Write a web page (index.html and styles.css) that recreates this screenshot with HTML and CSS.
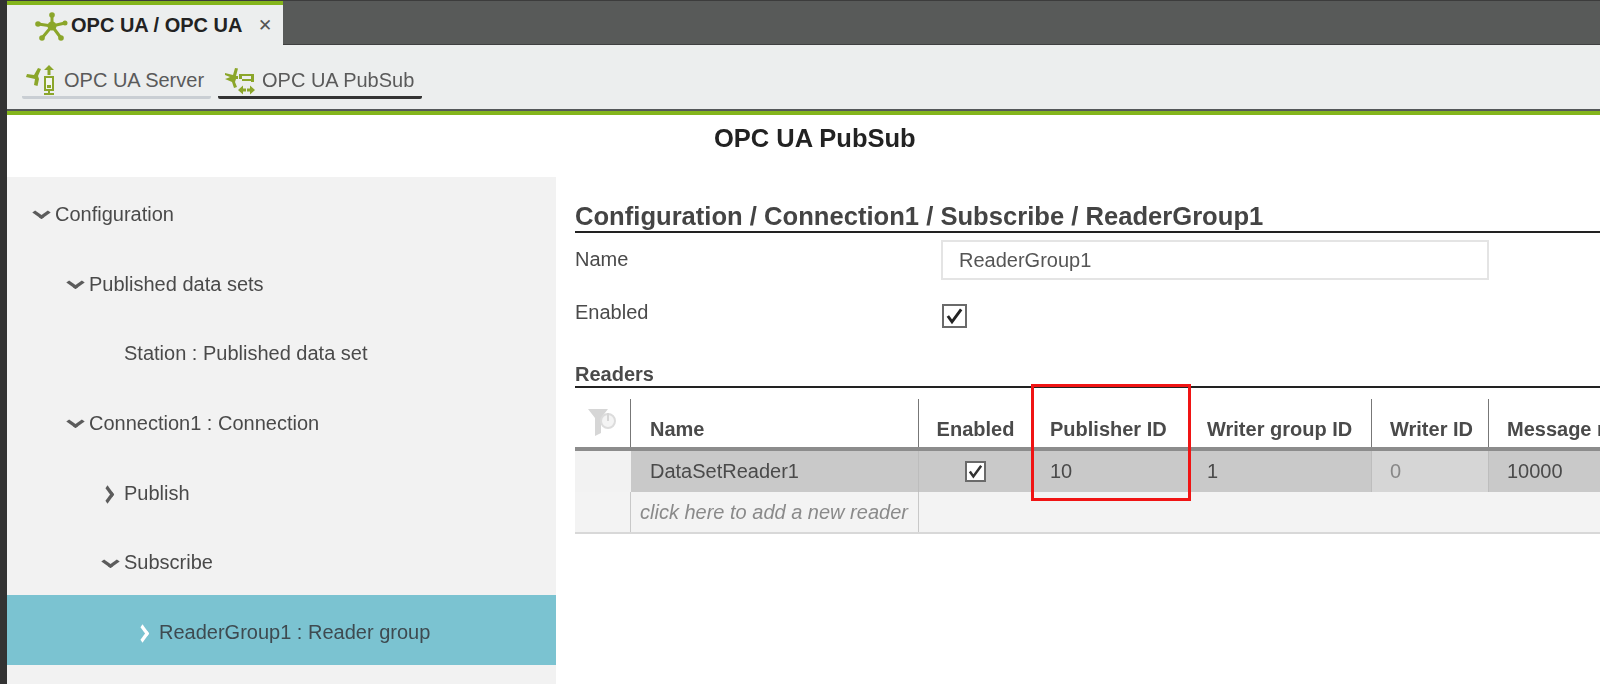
FILE: index.html
```html
<!DOCTYPE html>
<html lang="en">
<head>
<meta charset="utf-8">
<title>OPC UA PubSub</title>
<link rel="stylesheet" href="styles.css">
</head>
<body>
<div class="page">
  <header class="tabbar">
    <div class="tab">
      <svg class="tab-icon" width="34" height="30" viewBox="0 0 34 30"><g stroke="#8ba62a" fill="#8ba62a"><path d="M17 15L3 13M17 15L17 5M17 15L30 12M17 15L26 27M17 15L7 27" fill="none" stroke-width="3"/><circle cx="17" cy="15" r="4.500" stroke="none"/><circle cx="3" cy="13" r="2.800" stroke="none"/><circle cx="17" cy="4" r="2.800" stroke="none"/><circle cx="30" cy="12" r="2.500" stroke="none"/><circle cx="26" cy="27" r="2.800" stroke="none"/><circle cx="7" cy="27" r="2.800" stroke="none"/></g></svg>
      <span class="tab-label">OPC UA / OPC UA</span>
      <span class="tab-close">✕</span>
    </div>
  </header>
  <nav class="subnav">
    <div class="subitem">
      <svg width="32" height="32" viewBox="0 0 32 32"><g fill="#8ba62a"><path d="M1 10l7 1 4-7 3 1-3 7 1 3-1.500 7-3.500-1 1-6-9-2z"/><path d="M23 1l5 5h-3.500v5h-3V6H18z"/><path d="M22 25h2v4h-2zM18 29h10v2H18z"/></g><rect x="19" y="13" width="8" height="13" fill="#f4f6f0" stroke="#8ba62a" stroke-width="2"/><rect x="21" y="21" width="4" height="3" fill="#8ba62a"/></svg>
      <span>OPC UA Server</span>
    </div>
    <div class="subitem is-active">
      <svg width="32" height="32" viewBox="0 0 32 32"><g fill="#8ba62a"><path d="M1 9l8 2 2-7 3 .5-2 7.500h2v3h-2l-1 3 2 5-3 1-2-6-7-3 3-1 2-1-5-2z"/><path d="M15 10h15v2H15zM15 17h3v-5h-3zM27 12h3v6h-3zM15 15h15v2H15z"/><path d="M14 26l5-4.500v3h3v3h-3v3zM31 26l-5-4.500v3h-3v3h3v3z"/></g></svg>
      <span>OPC UA PubSub</span>
    </div>
  </nav>
  <div class="accent"></div>
  <h1 class="page-title">OPC UA PubSub</h1>
  <main class="workspace">
    <aside class="tree">
      <div class="node lvl-0"><span class="arrow down"></span>Configuration</div>
      <div class="node lvl-1"><span class="arrow down"></span>Published data sets</div>
      <div class="node lvl-2"><span class="arrow none"></span>Station : Published data set</div>
      <div class="node lvl-1"><span class="arrow down"></span>Connection1 : Connection</div>
      <div class="node lvl-2"><span class="arrow right"></span>Publish</div>
      <div class="node lvl-2"><span class="arrow down"></span>Subscribe</div>
      <div class="node lvl-3 is-selected"><span class="arrow right"></span>ReaderGroup1 : Reader group</div>
    </aside>
    <section class="detail">
      <h2 class="detail-title">Configuration / Connection1 / Subscribe / ReaderGroup1</h2>
      <div class="form-row row-name">
        <span class="form-label">Name</span>
        <div class="input">ReaderGroup1</div>
      </div>
      <div class="form-row row-enabled">
        <span class="form-label">Enabled</span>
        <span class="check check-lg"><svg viewBox="0 0 24 24"><path d="M4 12l5 7 11-15" fill="none" stroke="#222" stroke-width="3.500"/></svg></span>
      </div>
      <h3 class="section-title">Readers</h3>
      <div class="grid">
        <div class="grid-row head">
          <div class="cell c-filter"><svg width="34" height="30" viewBox="0 0 34 30"><path d="M1 1h20l-7 9v15l-6 3V10z" fill="#d6d6d6"/><circle cx="21" cy="13" r="7" fill="#f4f4f4" stroke="#dcdcdc" stroke-width="2"/><path d="M21 5v8" stroke="#d6d6d6" stroke-width="2"/></svg></div>
          <div class="cell c-name">Name</div>
          <div class="cell c-en center">Enabled</div>
          <div class="cell c-pub">Publisher ID</div>
          <div class="cell c-grp">Writer group ID</div>
          <div class="cell c-wid">Writer ID</div>
          <div class="cell c-msg">Message receive timeout</div>
        </div>
        <div class="grid-row body selected">
          <div class="cell c-filter"></div>
          <div class="cell c-name">DataSetReader1</div>
          <div class="cell c-en center"><span class="check"><svg viewBox="0 0 24 24"><path d="M4 12l5 7 11-15" fill="none" stroke="#333" stroke-width="3.500"/></svg></span></div>
          <div class="cell c-pub">10</div>
          <div class="cell c-grp">1</div>
          <div class="cell c-wid readonly">0</div>
          <div class="cell c-msg">10000</div>
        </div>
        <div class="grid-row body add">
          <div class="cell c-filter"></div>
          <div class="cell c-name add-hint">click here to add a new reader</div>
        </div>
      </div>
      <div class="highlight"></div>
    </section>
  </main>
</div>
</body>
</html>
```
FILE: styles.css
```css
* { box-sizing: border-box; }
html, body { margin: 0; height: 100%; overflow: hidden; background: #fff; }
body { font-family: "Liberation Sans", Arial, sans-serif; color: #444; }

.page {
  width: 1600px;
  height: 684px;
  border-left: 7px solid #333;
  overflow: hidden;
  display: flex;
  flex-direction: column;
  filter: blur(0.55px);
}

.tabbar {
  height: 45px;
  flex: none;
  background: #585a59;
  border-top: 1px solid #3c3c3c;
  border-bottom: 1px solid #3f4040;
}
.tab {
  width: 276px;
  height: 45px;
  background: #eceeee;
  border-top: 4px solid #84b51c;
  display: flex;
  align-items: center;
  padding-left: 28px;
  gap: 2px;
  font-size: 20px;
  font-weight: 700;
  color: #222;
}
.tab-icon { flex: none; }
.tab-close { margin-left: 13px; font-size: 17px; font-weight: 400; color: #555; }

.subnav {
  height: 66px;
  flex: none;
  background: #eceeee;
  border-bottom: 2px solid #55585a;
  display: flex;
  align-items: flex-start;
  padding: 19px 0 0 15px;
  gap: 7px;
  font-size: 20px;
  color: #5a5a5a;
}
.subitem {
  height: 35px;
  width: 189px;
  display: flex;
  align-items: center;
  gap: 6px;
  padding-left: 4px;
  border-bottom: 3px solid #c9ced3;
  border-radius: 2px;
}
.subitem.is-active { width: 204px; padding-left: 6px; border-bottom-color: #333; }

.accent { height: 4px; flex: none; background: #84b51c; }

.page-title {
  margin: 0;
  height: 62px;
  flex: none;
  padding: 9px 0 0 707px;
  font-size: 25.500px;
  line-height: 28px;
  font-weight: 700;
  color: #222;
}

.workspace {
  flex: 1;
  display: grid;
  grid-template-columns: 549px 1fr;
  min-height: 0;
}

.tree { background: #f2f2f2; font-size: 20px; color: #4a4a4a; }
.node {
  height: 69.700px;
  display: flex;
  align-items: center;
  padding-top: 5px;
}
.lvl-0 { padding-left: 26px; }
.lvl-1 { padding-left: 60px; }
.lvl-2 { padding-left: 95px; }
.lvl-3 { padding-left: 130px; }
.is-selected { background: #7bc3d1; color: #3e4a50; }

.arrow {
  width: 22px;
  flex: none;
  height: 12px;
  position: relative;
}
.arrow.down::before, .arrow.right::before {
  content: "";
  position: absolute;
  width: 9px;
  height: 9px;
  border-right: 4px solid #5c5c5c;
  border-bottom: 4px solid #5c5c5c;
}
.arrow.down::before { left: 2px; top: -2px; transform: scaleY(0.72) rotate(45deg); }
.arrow.right::before { left: -1px; top: 1px; transform: scaleX(0.72) rotate(-45deg); }
.is-selected .arrow.right::before { border-color: #fff; }

.detail { padding: 0 0 0 19px; position: relative; overflow: hidden; }
.detail-title {
  margin: 0;
  height: 56px;
  padding-top: 25px;
  border-bottom: 2px solid #222;
  font-size: 25.600px;
  line-height: 28px;
  font-weight: 700;
  color: #444;
  white-space: nowrap;
}
.form-row { display: flex; align-items: center; }
.form-label { width: 366px; flex: none; font-size: 20px; color: #4a4a4a; }
.row-name { height: 53px; padding-top: 1px; }
.row-name .form-label { margin-top: -1px; }
.row-enabled { height: 54px; }
.row-enabled .form-label { margin-top: -2px; }
.input {
  width: 548px;
  height: 40px;
  border: 2px solid #e4e4e4;
  background: #fff;
  padding-left: 16px;
  display: flex;
  align-items: center;
  font-size: 20px;
  color: #555;
}
.check {
  display: block;
  width: 21px;
  height: 21px;
  border: 2px solid #6a6a6a;
  background: #fff;
}
.check svg { display: block; width: 100%; height: 100%; }
.check-lg { width: 25px; height: 24px; margin: 6px 0 0 1px; }

.section-title {
  margin: 21px 0 0;
  height: 27px;
  padding-top: 3px;
  border-bottom: 2px solid #222;
  font-size: 20px;
  line-height: 20px;
  font-weight: 700;
  color: #4a4a4a;
}

.grid { margin-top: 11px; }
.grid-row {
  display: grid;
  grid-template-columns: 56px 288px 113px 157px 183px 117px 200px;
  font-size: 20px;
  white-space: nowrap;
}
.cell { padding-left: 18px; display: flex; align-items: center; overflow: hidden; }
.c-name { padding-left: 19px; }
.center { justify-content: center; padding-left: 0; }

.head { height: 52px; border-bottom: 4px solid #8c8c8c; font-weight: 700; color: #4a4a4a; }
.head .cell { padding-top: 13px; border-right: 1px solid #777; }
.head .c-filter { padding: 0 0 0 12px; }
.head .c-en { border-right: none; }
.head .c-msg { border-right: none; }

.body { height: 42px; }
.selected { background: #c9c9c9; height: 41px; color: #4a4a4a; }
.selected .cell { border-right: 1px solid #bdbdbd; }
.selected .c-filter { background: #f2f2f2; border-right: none; }
.selected .c-en { border-right: none; }
.readonly { background: #d6d6d6; color: #888; }

.add { background: #f3f3f3; border-bottom: 2px solid #d8d8d8; }
.add .c-filter { border-right: 1px solid #c8c8c8; }
.add .c-name { border-right: 1px solid #c8c8c8; padding-left: 9px; }
.add-hint { font-style: italic; color: #8a8a8a; }

.highlight {
  position: absolute;
  left: 475px;
  top: 207px;
  width: 160px;
  height: 117px;
  border: 3px solid #f01414;
  pointer-events: none;
}
```
